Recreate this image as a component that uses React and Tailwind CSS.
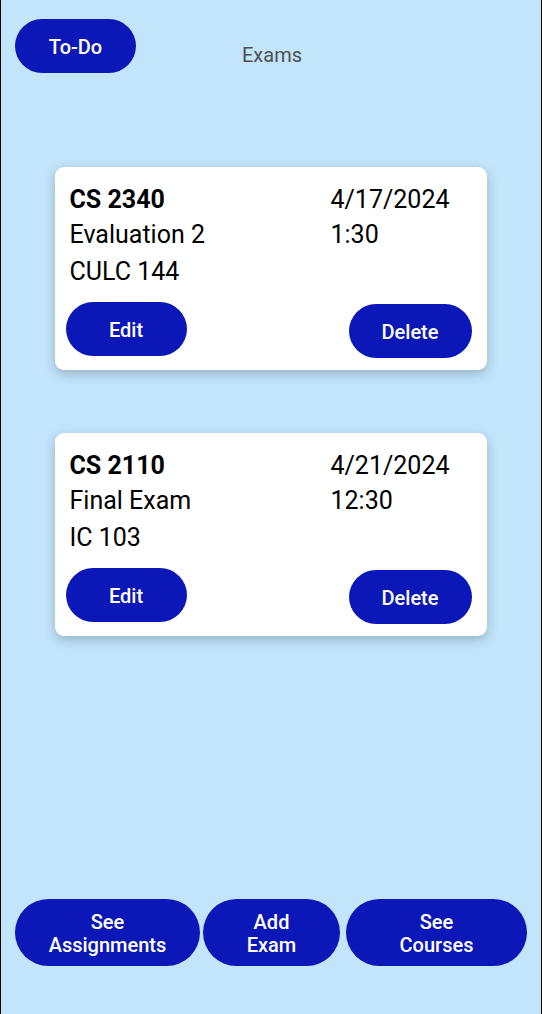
const exams = [
  { course: 'CS 2340', name: 'Evaluation 2', room: 'CULC 144', date: '4/17/2024', time: '1:30' },
  { course: 'CS 2110', name: 'Final Exam', room: 'IC 103', date: '4/21/2024', time: '12:30' },
]

const btn = 'bg-[#0c17b8] text-white font-medium rounded-full flex items-center justify-center text-center'

function ExamCard({ exam }) {
  return (
    <div className="w-[432px] h-[203px] bg-white rounded-[9px] shadow-[0_4px_12px_rgba(0,0,0,0.22)] px-[15px] pt-[20px] flex flex-col text-[25px] text-black">
      <div className="flex">
        <div className="w-[261px] flex flex-col">
          <span className="font-bold leading-[26px]">{exam.course}</span>
          <span className="leading-[26px] mt-[9px]">{exam.name}</span>
          <span className="leading-[26px] mt-[11px]">{exam.room}</span>
        </div>
        <div className="flex flex-col">
          <span className="leading-[26px]">{exam.date}</span>
          <span className="leading-[26px] mt-[9px]">{exam.time}</span>
        </div>
      </div>
      <div className="flex justify-between mt-[17px]">
        <button className={`${btn} w-[121px] h-[54px] text-[20px] -ml-[4px] pt-[1px]`}>Edit</button>
        <button className={`${btn} w-[123px] h-[54px] text-[20px] mt-[2px] pt-[1px]`}>Delete</button>
      </div>
    </div>
  )
}

export default function App() {
  return (
    <div className="w-[542px] h-[1014px] bg-[#c2e5fc] border-x border-black flex flex-col font-['Roboto',sans-serif] overflow-hidden">
      <div className="flex items-center pl-[14px] pt-[19px]">
        <button className={`${btn} w-[121px] h-[54px] text-[20px] pt-[1px]`}>To-Do</button>
        <span className="ml-[106px] mt-[18px] text-[20px] text-[#4f4f4f]">Exams</span>
      </div>
      <div className="flex flex-col items-center gap-[63px] mt-[94px] pr-[1px]">
        {exams.map(e => <ExamCard key={e.course} exam={e} />)}
      </div>
      <div className="mt-auto mb-[48px] flex pl-[14px] gap-[3px] text-[20px] leading-[23px]">
        <button className={`${btn} w-[185px] h-[67px] pt-[2px]`}>See<br />Assignments</button>
        <button className={`${btn} w-[137px] h-[67px] pt-[2px]`}>Add<br />Exam</button>
        <button className={`${btn} w-[181px] h-[67px] ml-[3px] pt-[2px]`}>See<br />Courses</button>
      </div>
    </div>
  )
}
